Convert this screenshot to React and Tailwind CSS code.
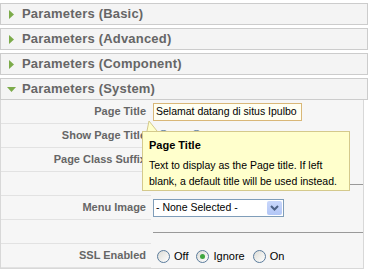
import React from 'react';

const font = { fontFamily: '"Liberation Sans", Arial, sans-serif' };

const Arrow = ({ open }) =>
  open ? (
    <svg width="9" height="7" viewBox="0 0 9 7" className="mr-[6px]">
      <polygon points="0,1 9,1 4.5,6" fill="#7cab4a" />
    </svg>
  ) : (
    <svg width="7" height="9" viewBox="0 0 7 9" className="ml-[1px] mr-[7px]">
      <polygon points="1,0 6,4.5 1,9" fill="#7cab4a" />
    </svg>
  );

const Toggler = ({ title, open }) => (
  <div className="flex h-[22px] items-center border border-[#cccccc] bg-[#f4f4f4] pl-[6px] text-[13px] font-bold tracking-[0.2px] text-[#666666]">
    <Arrow open={open} />
    <span>{title}</span>
  </div>
);

const Radio = ({ checked }) => (
  <span className="relative inline-flex h-[13px] w-[13px] items-center justify-center rounded-full border border-[#5a7b9c] bg-gradient-to-br from-[#dcdcd6] to-white">
    {checked && <span className="h-[5px] w-[5px] rounded-full bg-[#3fa63f]" />}
  </span>
);

const Row = ({ label, children }) => (
  <div className="flex h-[24px]">
    <div className="flex w-[150px] items-center justify-end whitespace-nowrap border-b border-[#e2e2e2] pr-[5px] text-[11px] font-bold text-[#666666]">
      {label}
    </div>
    <div className="flex flex-1 items-center pl-[2px]">{children}</div>
  </div>
);

const App = () => {
  return (
    <div className="relative h-[274px] w-[372px] overflow-hidden bg-white" style={font}>
      <div className="flex w-[368px] flex-col gap-[3px] pt-[3px]">
        <Toggler title="Parameters (Basic)" />
        <Toggler title="Parameters (Advanced)" />
        <Toggler title="Parameters (Component)" />
        <div>
          <Toggler title="Parameters (System)" open />
          <div className="w-[364px] border-x border-b border-[#d8d8d8] bg-[#f6f6f6]">
            <Row label="Page Title">
              <div className="flex h-[18px] w-[149px] items-center overflow-hidden whitespace-nowrap border border-[#d9b778] bg-[#fffff2] pl-[2px] text-[10.5px] text-black">
                Selamat datang di situs Ipulbo
              </div>
            </Row>
            <Row label="Show Page Title">
              <div className="flex items-center gap-[3px] pl-[4px] text-[11px] text-black">
                <Radio /> No <Radio checked /> Yes
              </div>
            </Row>
            <Row label="Page Class Suffix">
              <div className="h-[18px] w-[149px] border border-[#7f9db9] bg-white" />
            </Row>
            <Row label="">
              <div className="h-0 w-full border-t border-[#999999]" />
            </Row>
            <Row label="Menu Image">
              <div className="flex h-[18px] w-[131px] items-center justify-between whitespace-nowrap border border-[#7f9db9] bg-white pl-[2px] pr-[1px] text-[10.5px] text-black">
                <span>- None Selected -</span>
                <span className="flex h-[14px] w-[15px] items-center justify-center rounded-[2px] bg-gradient-to-b from-[#c9d7fb] to-[#b2c6f6]">
                  <svg width="9" height="6" viewBox="0 0 9 6">
                    <polyline points="1,1 4.5,4.5 8,1" fill="none" stroke="#4d6185" strokeWidth="2" />
                  </svg>
                </span>
              </div>
            </Row>
            <Row label="">
              <div className="h-0 w-full border-t border-[#999999]" />
            </Row>
            <Row label="SSL Enabled">
              <div className="flex items-center whitespace-nowrap pl-[4px] text-[11px] text-black">
                <Radio />
                <span className="ml-[4px] mr-[8px]">Off</span>
                <Radio checked />
                <span className="ml-[4px] mr-[8px]">Ignore</span>
                <Radio />
                <span className="ml-[4px]">On</span>
              </div>
            </Row>
          </div>
        </div>
      </div>

      {/* tooltip */}
      <svg width="12" height="11" viewBox="0 0 12 11" className="absolute left-[146px] top-[121px]">
        <polygon points="3,0 11,10 1,10" fill="#ffffcc" />
        <polyline points="1,10 3,0 11,10" fill="none" stroke="#d4c98c" strokeWidth="1" />
      </svg>
      <div className="absolute left-[142px] top-[131px] h-[60px] w-[208px] border border-[#d4c98c] bg-[#ffffcc] px-[6px] pt-[7px] text-black">
        <div className="mb-[5px] text-[11px] font-bold leading-[13px]">Page Title</div>
        <div className="text-[10.5px] leading-[16px]">
          Text to display as the Page title. If left
          <br />
          blank, a default title will be used instead.
        </div>
      </div>
    </div>
  );
};

export default App;
